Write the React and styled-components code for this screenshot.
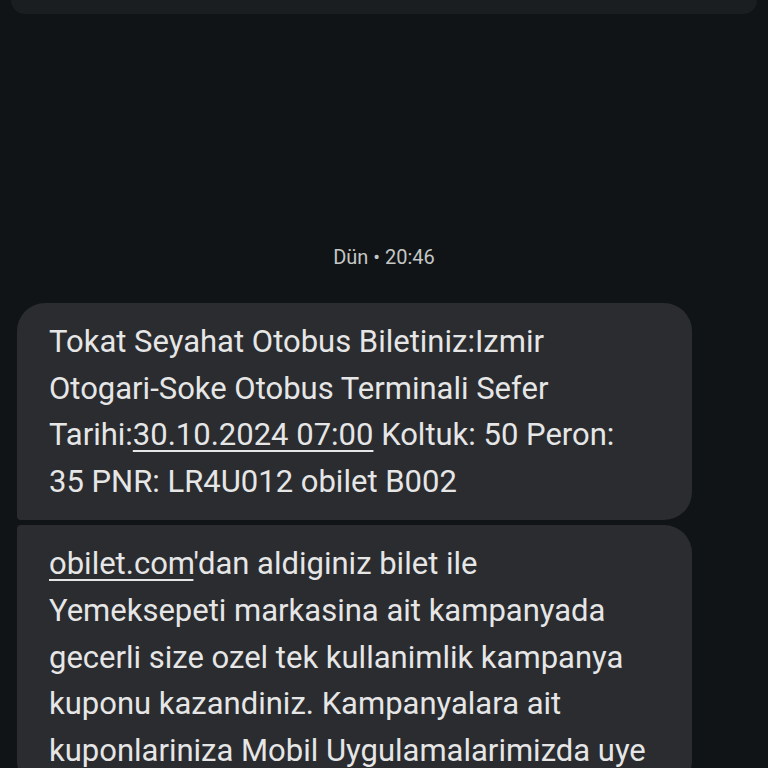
import React from "react";
import styled, { createGlobalStyle } from "styled-components";

const GlobalStyle = createGlobalStyle`
  html, body {
    margin: 0;
    padding: 0;
    background: #111417;
  }
  body {
    font-family: Roboto, "Noto Sans", sans-serif;
    overflow: hidden;
  }
`;

const Page = styled.div`
  width: 768px;
  height: 768px;
  overflow: hidden;
  display: flex;
  flex-direction: column;
  background: #111417;
  color: #e3e3e3;
`;

const PrevCard = styled.div`
  flex: none;
  height: 14px;
  margin: 0 11px;
  background: #1b1e21;
  border-radius: 0 0 14px 14px;
`;

const Stamp = styled.div`
  flex: none;
  margin: 231px 0 34px;
  text-align: center;
  font-size: 20px;
  line-height: 24px;
  color: #c4c7c5;
`;

const Thread = styled.div`
  display: flex;
  flex-direction: column;
  gap: 5px;
  padding-left: 17px;
`;

const Bubble = styled.div`
  box-sizing: border-box;
  width: 675px;
  padding: 16px 32px 15px;
  background: #2a2c30;
  border-radius: ${(p) => (p.$first ? "28px 28px 28px 4px" : "4px 28px 28px 28px")};
  font-size: 31px;
  line-height: 46.6px;
  white-space: nowrap;
  color: #e6e6e6;
`;

const Link = styled.span`
  text-decoration: underline;
  text-decoration-thickness: 2px;
  text-underline-offset: 5px;
`;

export default function App() {
  return (
    <>
      <GlobalStyle />
      <Page>
        <PrevCard />
        <Stamp>Dün • 20:46</Stamp>
        <Thread>
          <Bubble $first>
            Tokat Seyahat Otobus Biletiniz:Izmir
            <br />
            Otogari-Soke Otobus Terminali Sefer
            <br />
            Tarihi:<Link>30.10.2024 07:00</Link> Koltuk: 50 Peron:
            <br />
            35 PNR: LR4U012 obilet B002
          </Bubble>
          <Bubble>
            <Link>obilet.com</Link>'dan aldiginiz bilet ile
            <br />
            Yemeksepeti markasina ait kampanyada
            <br />
            gecerli size ozel tek kullanimlik kampanya
            <br />
            kuponu kazandiniz. Kampanyalara ait
            <br />
            kuponlariniza Mobil Uygulamalarimizda uye
          </Bubble>
        </Thread>
      </Page>
    </>
  );
}
